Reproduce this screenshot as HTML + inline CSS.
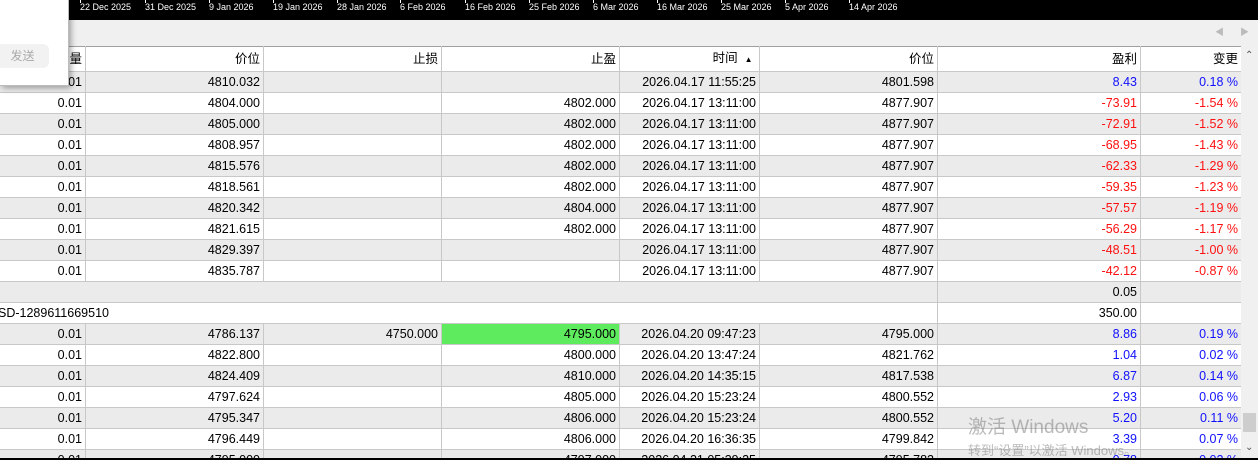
<!DOCTYPE html>
<html><head><meta charset="utf-8"><style>
*{margin:0;padding:0;box-sizing:border-box}
html,body{width:1258px;height:460px;overflow:hidden}
body{background:#f0f0f0;font-family:"Liberation Sans","Noto Sans CJK SC",sans-serif;font-size:12.5px;color:#000;position:relative}
#wrap{position:absolute;left:0;top:0;width:1258px;height:460px;overflow:hidden}
#top{position:absolute;left:0;top:0;width:1258px;height:20px;background:#000}
#top span{position:absolute;top:2px;color:#fff;font-size:9px;white-space:nowrap}
#top i{position:absolute;top:0;width:1px;height:3px;background:#fff}
#bar{position:absolute;top:20px;left:0;width:1258px;height:26px;background:#f0f0f0}
#tw{position:absolute;left:0;top:46px;width:1241px;height:412px;overflow:hidden}
table{position:absolute;left:-1px;top:0;width:1242px;border-collapse:collapse;table-layout:fixed}
td{height:21px;border:1px solid #c8c8c8;text-align:right;padding:0 3px 0 2px;white-space:nowrap;overflow:hidden;line-height:19px}
tr.h td{background:#fff;border-top:1px solid #a0a0a0;height:25px}
tr.g td{background:#ebebeb}
tr.w td{background:#fff}
.b{color:#1010ff}.r{color:#ff1010}
#sb{position:absolute;left:1241px;top:46px;width:17px;height:412px;background:#f0f0f0}
#pop{position:absolute;left:0;top:0;width:69px;height:86px;background:#fff;box-shadow:2px 2px 6px rgba(0,0,0,.35);border-right:1px solid #bbb;border-bottom:1px solid #bbb}
#btn{position:absolute;left:-4px;top:44px;width:53px;height:24px;background:#f2f2f2;border-radius:6px;color:#aaa;font-size:12px;text-align:center;line-height:24px}
.wm{position:absolute;color:rgba(120,120,120,.5);white-space:nowrap}
</style></head><body><div id="wrap">
<div id="top">
<i style="left:80px"></i><span style="left:80px">22 Dec 2025</span>
<i style="left:145px"></i><span style="left:145px">31 Dec 2025</span>
<i style="left:209px"></i><span style="left:209px">9 Jan 2026</span>
<i style="left:273px"></i><span style="left:273px">19 Jan 2026</span>
<i style="left:337px"></i><span style="left:337px">28 Jan 2026</span>
<i style="left:400px"></i><span style="left:400px">6 Feb 2026</span>
<i style="left:465px"></i><span style="left:465px">16 Feb 2026</span>
<i style="left:529px"></i><span style="left:529px">25 Feb 2026</span>
<i style="left:593px"></i><span style="left:593px">6 Mar 2026</span>
<i style="left:657px"></i><span style="left:657px">16 Mar 2026</span>
<i style="left:721px"></i><span style="left:721px">25 Mar 2026</span>
<i style="left:785px"></i><span style="left:785px">5 Apr 2026</span>
<i style="left:849px"></i><span style="left:849px">14 Apr 2026</span>
</div>
<div id="bar"><span style="position:absolute;left:1215px;top:5px;color:#bbb;font-size:9px">◀</span><span style="position:absolute;left:1240px;top:5px;color:#bbb;font-size:9px">▶</span></div>
<div id="tw"><table>
<colgroup><col style="width:86px"><col style="width:178px"><col style="width:178px"><col style="width:178px"><col style="width:140px"><col style="width:178px"><col style="width:203px"><col style="width:101px"></colgroup>
<tr class="h"><td>量</td><td>价位</td><td>止损</td><td>止盈</td><td>时间 &nbsp;<span style="font-size:8px">▲</span>&nbsp;</td><td>价位</td><td>盈利</td><td>变更</td></tr>
<tr class="g"><td>0.01</td><td>4810.032</td><td></td><td></td><td>2026.04.17 11:55:25</td><td>4801.598</td><td class="b">8.43</td><td class="b">0.18 %</td></tr>
<tr class="w"><td>0.01</td><td>4804.000</td><td></td><td>4802.000</td><td>2026.04.17 13:11:00</td><td>4877.907</td><td class="r">-73.91</td><td class="r">-1.54 %</td></tr>
<tr class="g"><td>0.01</td><td>4805.000</td><td></td><td>4802.000</td><td>2026.04.17 13:11:00</td><td>4877.907</td><td class="r">-72.91</td><td class="r">-1.52 %</td></tr>
<tr class="w"><td>0.01</td><td>4808.957</td><td></td><td>4802.000</td><td>2026.04.17 13:11:00</td><td>4877.907</td><td class="r">-68.95</td><td class="r">-1.43 %</td></tr>
<tr class="g"><td>0.01</td><td>4815.576</td><td></td><td>4802.000</td><td>2026.04.17 13:11:00</td><td>4877.907</td><td class="r">-62.33</td><td class="r">-1.29 %</td></tr>
<tr class="w"><td>0.01</td><td>4818.561</td><td></td><td>4802.000</td><td>2026.04.17 13:11:00</td><td>4877.907</td><td class="r">-59.35</td><td class="r">-1.23 %</td></tr>
<tr class="g"><td>0.01</td><td>4820.342</td><td></td><td>4804.000</td><td>2026.04.17 13:11:00</td><td>4877.907</td><td class="r">-57.57</td><td class="r">-1.19 %</td></tr>
<tr class="w"><td>0.01</td><td>4821.615</td><td></td><td>4802.000</td><td>2026.04.17 13:11:00</td><td>4877.907</td><td class="r">-56.29</td><td class="r">-1.17 %</td></tr>
<tr class="g"><td>0.01</td><td>4829.397</td><td></td><td></td><td>2026.04.17 13:11:00</td><td>4877.907</td><td class="r">-48.51</td><td class="r">-1.00 %</td></tr>
<tr class="w"><td>0.01</td><td>4835.787</td><td></td><td></td><td>2026.04.17 13:11:00</td><td>4877.907</td><td class="r">-42.12</td><td class="r">-0.87 %</td></tr>
<tr class="g"><td colspan="6"></td><td>0.05</td><td></td></tr>
<tr class="w"><td colspan="6" style="text-align:left;padding-left:0;text-indent:-2px">SD-1289611669510</td><td>350.00</td><td></td></tr>
<tr class="g"><td>0.01</td><td>4786.137</td><td>4750.000</td><td style="background:#5eeb5e">4795.000</td><td>2026.04.20 09:47:23</td><td>4795.000</td><td class="b">8.86</td><td class="b">0.19 %</td></tr>
<tr class="w"><td>0.01</td><td>4822.800</td><td></td><td>4800.000</td><td>2026.04.20 13:47:24</td><td>4821.762</td><td class="b">1.04</td><td class="b">0.02 %</td></tr>
<tr class="g"><td>0.01</td><td>4824.409</td><td></td><td>4810.000</td><td>2026.04.20 14:35:15</td><td>4817.538</td><td class="b">6.87</td><td class="b">0.14 %</td></tr>
<tr class="w"><td>0.01</td><td>4797.624</td><td></td><td>4805.000</td><td>2026.04.20 15:23:24</td><td>4800.552</td><td class="b">2.93</td><td class="b">0.06 %</td></tr>
<tr class="g"><td>0.01</td><td>4795.347</td><td></td><td>4806.000</td><td>2026.04.20 15:23:24</td><td>4800.552</td><td class="b">5.20</td><td class="b">0.11 %</td></tr>
<tr class="w"><td>0.01</td><td>4796.449</td><td></td><td>4806.000</td><td>2026.04.20 16:36:35</td><td>4799.842</td><td class="b">3.39</td><td class="b">0.07 %</td></tr>
<tr class="g"><td>0.01</td><td>4795.000</td><td></td><td>4797.000</td><td>2026.04.21 05:39:25</td><td>4795.782</td><td class="b">0.78</td><td class="b">0.02 %</td></tr>
</table></div>
<div id="sb">
<span style="position:absolute;left:4px;top:4px;font-size:10px;color:#555">⌃</span>
<div style="position:absolute;left:2px;top:367px;width:13px;height:19px;background:#cdcdcd"></div>
<span style="position:absolute;left:4px;top:396px;font-size:10px;color:#555">⌄</span>
</div>
<div style="position:absolute;left:0;top:458px;width:1258px;height:2px;background:#000"></div>
<div id="pop"><div id="btn">发送</div></div>
<div class="wm" style="left:968px;top:412px;font-size:19px">激活 Windows</div>
<div class="wm" style="left:968px;top:440px;font-size:13px">转到“设置”以激活 Windows。</div>
</div></body></html>
